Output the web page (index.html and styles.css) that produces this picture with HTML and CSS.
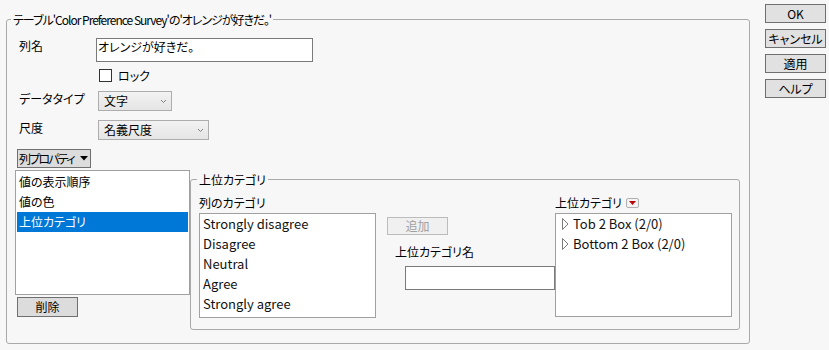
FILE: index.html
```html
<!DOCTYPE html>
<html lang="ja">
<head>
  <meta charset="UTF-8" />
  <title>列情報</title>
  <link rel="stylesheet" href="styles.css">
</head>
<body>
  <fieldset class="panel">
    <legend>テーブル'Color Preference Survey'の'オレンジが好きだ。'</legend>

    <div class="row">
      <span class="label">列名</span>
      <div class="text-field name-field">オレンジが好きだ。</div>
    </div>

    <div class="row row-lock">
      <span class="check"></span>
      <span class="check-label">ロック</span>
    </div>

    <div class="row row-gap">
      <span class="label">データタイプ</span>
      <div class="select sel-type">
        <span>文字</span>
        <svg class="chev" width="7" height="5" viewBox="0 0 7 5"><polyline points="1,1 3.5,3.5 6,1" fill="none" stroke="#808080" stroke-width="1"/></svg>
      </div>
    </div>

    <div class="row row-gap">
      <span class="label">尺度</span>
      <div class="select sel-scale">
        <span>名義尺度</span>
        <svg class="chev" width="7" height="5" viewBox="0 0 7 5"><polyline points="1,1 3.5,3.5 6,1" fill="none" stroke="#808080" stroke-width="1"/></svg>
      </div>
    </div>

    <button class="btn prop-btn"><span class="prop-text">列プロパティ</span>
      <svg width="8" height="5" viewBox="0 0 8 5"><polygon points="0,0 8,0 4,4.5" fill="#000"/></svg>
    </button>

    <div class="props">
      <div class="side">
        <ul class="list prop-list">
          <li>値の表示順序</li>
          <li>値の色</li>
          <li class="selected">上位カテゴリ</li>
        </ul>
        <button class="btn del-btn">削除</button>
      </div>

      <fieldset class="group">
        <legend>上位カテゴリ</legend>
        <div class="cols">
          <div class="col col-src">
            <div class="col-title">列のカテゴリ</div>
            <ul class="list cat-list">
              <li>Strongly disagree</li>
              <li>Disagree</li>
              <li>Neutral</li>
              <li>Agree</li>
              <li>Strongly agree</li>
            </ul>
          </div>

          <div class="col col-mid">
            <button class="btn add-btn" disabled>追加</button>
            <div class="mid-label">上位カテゴリ名</div>
            <div class="text-field group-field"></div>
          </div>

          <div class="col col-dst">
            <div class="col-title title-menu">上位カテゴリ
              <svg width="13" height="10" viewBox="0 0 13 10"><rect x="0.5" y="0.5" width="12" height="9" rx="1.5" fill="#f4f4f4" stroke="#b0b0b0"/><polygon points="3,3 10,3 6.5,7" fill="#c00000"/></svg>
            </div>
            <ul class="list cat-list tree">
              <li><svg width="7" height="12" viewBox="0 0 7 12"><polygon points="0.5,0.5 6,6 0.5,11.5" fill="none" stroke="#7a7a7a"/></svg>Tob 2 Box (2/0)</li>
              <li><svg width="7" height="12" viewBox="0 0 7 12"><polygon points="0.5,0.5 6,6 0.5,11.5" fill="none" stroke="#7a7a7a"/></svg>Bottom 2 Box (2/0)</li>
            </ul>
          </div>
        </div>
      </fieldset>
    </div>
  </fieldset>

  <div class="actions">
    <button class="btn">OK</button>
    <button class="btn">キャンセル</button>
    <button class="btn">適用</button>
    <button class="btn">ヘルプ</button>
  </div>
</body>
</html>
```

FILE: styles.css
```css
body {
  margin: 0;
  padding: 4px 0 0 6px;
  background: #f7f7f7;
  font-family: "Noto Sans CJK JP", sans-serif;
  font-size: 12px;
  line-height: 16px;
  color: #000;
  font-feature-settings: "palt";
  display: flex;
  align-items: flex-start;
}
fieldset {
  margin: 0;
  min-inline-size: auto;
  box-sizing: border-box;
  border: 1px solid #a9a9a9;
  border-radius: 3px;
}
legend {
  padding: 0 2px;
  line-height: 15px;
}
.panel {
  margin-top: 8px;
  width: 744px;
  padding: 11px 9px 13px 8px;
}
.panel > legend {
  margin-left: -4px;
  letter-spacing: -1px;
}
.row {
  display: flex;
  align-items: flex-start;
}
.label {
  width: 77px;
  margin-left: 4px;
}
.text-field {
  box-sizing: border-box;
  height: 24px;
  border: 1px solid #7a7a7a;
  background: #fff;
  padding: 0 1px;
}
.name-field {
  width: 217px;
}
.row-lock {
  margin-top: 7px;
  height: 13px;
  align-items: center;
}
.check {
  width: 13px;
  height: 13px;
  box-sizing: border-box;
  border: 1px solid #333;
  background: #fff;
  margin-left: 84px;
}
.check-label {
  margin-left: 6px;
}
.row-gap {
  margin-top: 9px;
}
.select {
  display: flex;
  align-items: center;
  box-sizing: border-box;
  height: 20px;
  margin-left: 2px;
  padding: 0 4px 0 5px;
  border: 1px solid #adadad;
  background: linear-gradient(#f2f2f2, #e5e5e5);
}
.chev {
  margin-left: auto;
}
.sel-type {
  width: 74px;
}
.sel-scale {
  width: 111px;
}
.btn {
  font: inherit;
  color: #000;
  box-sizing: border-box;
  height: 19px;
  padding: 0;
  border: 1px solid #6f6f6f;
  background: #dcdcdc;
  border-radius: 0;
  white-space: nowrap;
}
.prop-btn {
  margin: 9px 0 0 2px;
  width: 74px;
  display: flex;
  align-items: center;
  padding-left: 1px;
  gap: 6px;
}
.prop-text {
  letter-spacing: -1.8px;
}
.props {
  display: flex;
  align-items: flex-start;
  margin-top: 2px;
}
.side {
  width: 175px;
}
.list {
  list-style: none;
  margin: 0;
  box-sizing: border-box;
  border: 1px solid #a0a0a0;
  background: #fff;
}
.prop-list {
  height: 125px;
  padding: 1px;
}
.prop-list li {
  height: 20px;
  line-height: 20px;
  padding-left: 2px;
}
.prop-list .selected {
  background: #0078d7;
  color: #fff;
}
.del-btn {
  margin: 2px 0 0 2px;
  width: 61px;
  height: 20px;
}
.group {
  margin-top: 2px;
  width: 550px;
  height: 158px;
  padding: 8px 7px 11px 8px;
}
.group > legend {
  margin-left: -2px;
}
.cols {
  display: flex;
  align-items: flex-start;
}
.col-src, .col-dst {
  width: 177px;
}
.col-mid {
  width: 179px;
  padding-top: 22px;
  display: flex;
  flex-direction: column;
  align-items: flex-start;
}
.cat-list {
  margin-top: 2px;
  height: 105px;
  padding: 0 0 0 3px;
  font-size: 13px;
  color: #111;
}
.cat-list li {
  height: 20px;
  line-height: 20px;
}
.add-btn {
  margin-left: 11px;
  width: 61px;
  height: 18px;
  border-color: #bcbcbc;
  background: #f0f0f0;
  color: #a0a0a0;
}
.mid-label {
  margin: 9px 0 0 19px;
}
.group-field {
  margin: 6px 0 0 29px;
  width: 150px;
}
.title-menu {
  display: flex;
  align-items: center;
  gap: 4px;
}
.tree {
  height: 104px;
  padding-left: 6px;
}
.tree li {
  display: flex;
  align-items: center;
  gap: 4px;
}
.actions {
  margin-left: 15px;
  display: flex;
  flex-direction: column;
  gap: 6px;
}
.actions .btn {
  width: 61px;
  background: #e1e1e1;
}
```
